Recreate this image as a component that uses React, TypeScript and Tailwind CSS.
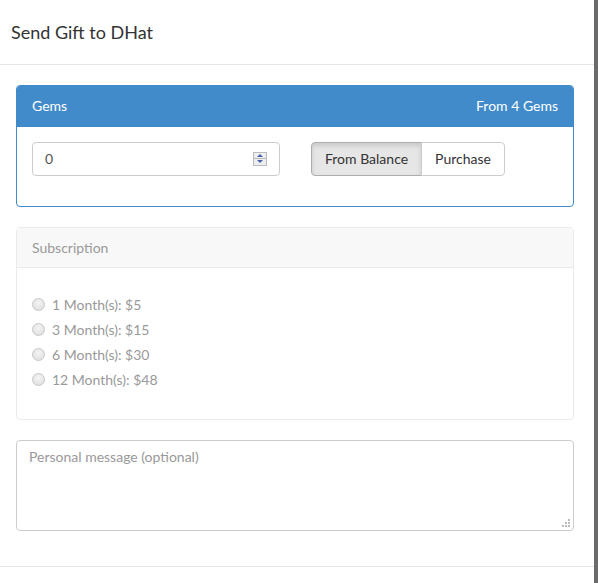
const options = ['1 Month(s): $5', '3 Month(s): $15', '6 Month(s): $30', '12 Month(s): $48'];

const App = () => {
    return (
        <div className="flex h-[583px] w-[598px] overflow-hidden bg-[#6b6b6b] font-['Lato',sans-serif] text-[14px] text-[#333]">
            {/* Modal */}
            <div className="flex h-full w-[594px] shrink-0 flex-col bg-white">
                {/* Header */}
                <div className="flex h-[65px] shrink-0 items-center border-b border-[#e5e5e5] pl-[11px]">
                    <h4 className="text-[18px] leading-none text-[#333]">Send Gift to DHat</h4>
                </div>

                {/* Body */}
                <div className="flex flex-col pt-[20px] pl-[16px] pr-[20px]">
                    {/* Gems panel */}
                    <div className="rounded-[4px] border border-[#428bca]">
                        <div className="flex h-[41px] items-center justify-between rounded-t-[3px] bg-[#428bca] px-[15px] pb-[2px] text-white">
                            <span>Gems</span>
                            <span>From 4 Gems</span>
                        </div>
                        <div className="flex items-start gap-[31px] px-[15px] pt-[15px] pb-[30px]">
                            <div className="flex h-[34px] w-[248px] items-center justify-between rounded-[4px] border border-[#ccc] pb-[1px] pl-[12px] pr-[12px]">
                                <span className="text-[#555]">0</span>
                                <div className="flex flex-col">
                                    <div className="flex h-[7px] w-[14px] items-center justify-center border border-[#bbb] bg-[#eee]">
                                        <div className="h-0 w-0 border-x-[3px] border-b-[3px] border-x-transparent border-b-[#4a63a8]" />
                                    </div>
                                    <div className="flex h-[7px] w-[14px] items-center justify-center border border-t-0 border-[#bbb] bg-[#eee]">
                                        <div className="h-0 w-0 border-x-[3px] border-t-[3px] border-x-transparent border-t-[#4a63a8]" />
                                    </div>
                                </div>
                            </div>
                            <div className="flex h-[34px]">
                                <button
                                    type="button"
                                    className="h-full rounded-l-[4px] border border-[#adadad] bg-[#e6e6e6] px-[13px] pb-[2px] text-[#333] shadow-[inset_0_3px_5px_rgba(0,0,0,0.125)]"
                                >
                                    From Balance
                                </button>
                                <button
                                    type="button"
                                    className="-ml-px h-full rounded-r-[4px] border border-[#ccc] bg-white px-[13px] pb-[2px] text-[#333]"
                                >
                                    Purchase
                                </button>
                            </div>
                        </div>
                    </div>

                    {/* Subscription panel */}
                    <div className="mt-[20px] rounded-[4px] border border-[#eaeaea]">
                        <div className="flex h-[40px] items-center border-b border-[#eaeaea] bg-[#f8f8f8] px-[15px] text-[#999]">
                            Subscription
                        </div>
                        <div className="flex flex-col gap-[7px] px-[15px] pt-[27px] pb-[31px]">
                            {options.map((o) => (
                                <label key={o} className="flex h-[18px] items-center gap-[7px] text-[#999]">
                                    <span className="h-[13px] w-[13px] rounded-full border border-[#c6c6c6] bg-[radial-gradient(circle_at_50%_35%,#f4f4f4,#dcdcdc)]" />
                                    <span>{o}</span>
                                </label>
                            ))}
                        </div>
                    </div>

                    {/* Message */}
                    <div className="relative mt-[20px] h-[91px] rounded-[4px] border border-[#ccc] px-[12px] pt-[5px] text-[#999]">
                        Personal message (optional)
                        <div className="absolute right-[3px] bottom-[3px] grid grid-cols-3 gap-[1px]">
                            <span />
                            <span />
                            <span className="h-[2px] w-[2px] bg-[#bbb]" />
                            <span />
                            <span className="h-[2px] w-[2px] bg-[#bbb]" />
                            <span className="h-[2px] w-[2px] bg-[#bbb]" />
                            <span className="h-[2px] w-[2px] bg-[#bbb]" />
                            <span className="h-[2px] w-[2px] bg-[#bbb]" />
                            <span className="h-[2px] w-[2px] bg-[#bbb]" />
                        </div>
                    </div>
                </div>

                {/* Footer border */}
                <div className="mt-[35px] border-t border-[#e5e5e5]" />
            </div>
        </div>
    );
};

export default App;
